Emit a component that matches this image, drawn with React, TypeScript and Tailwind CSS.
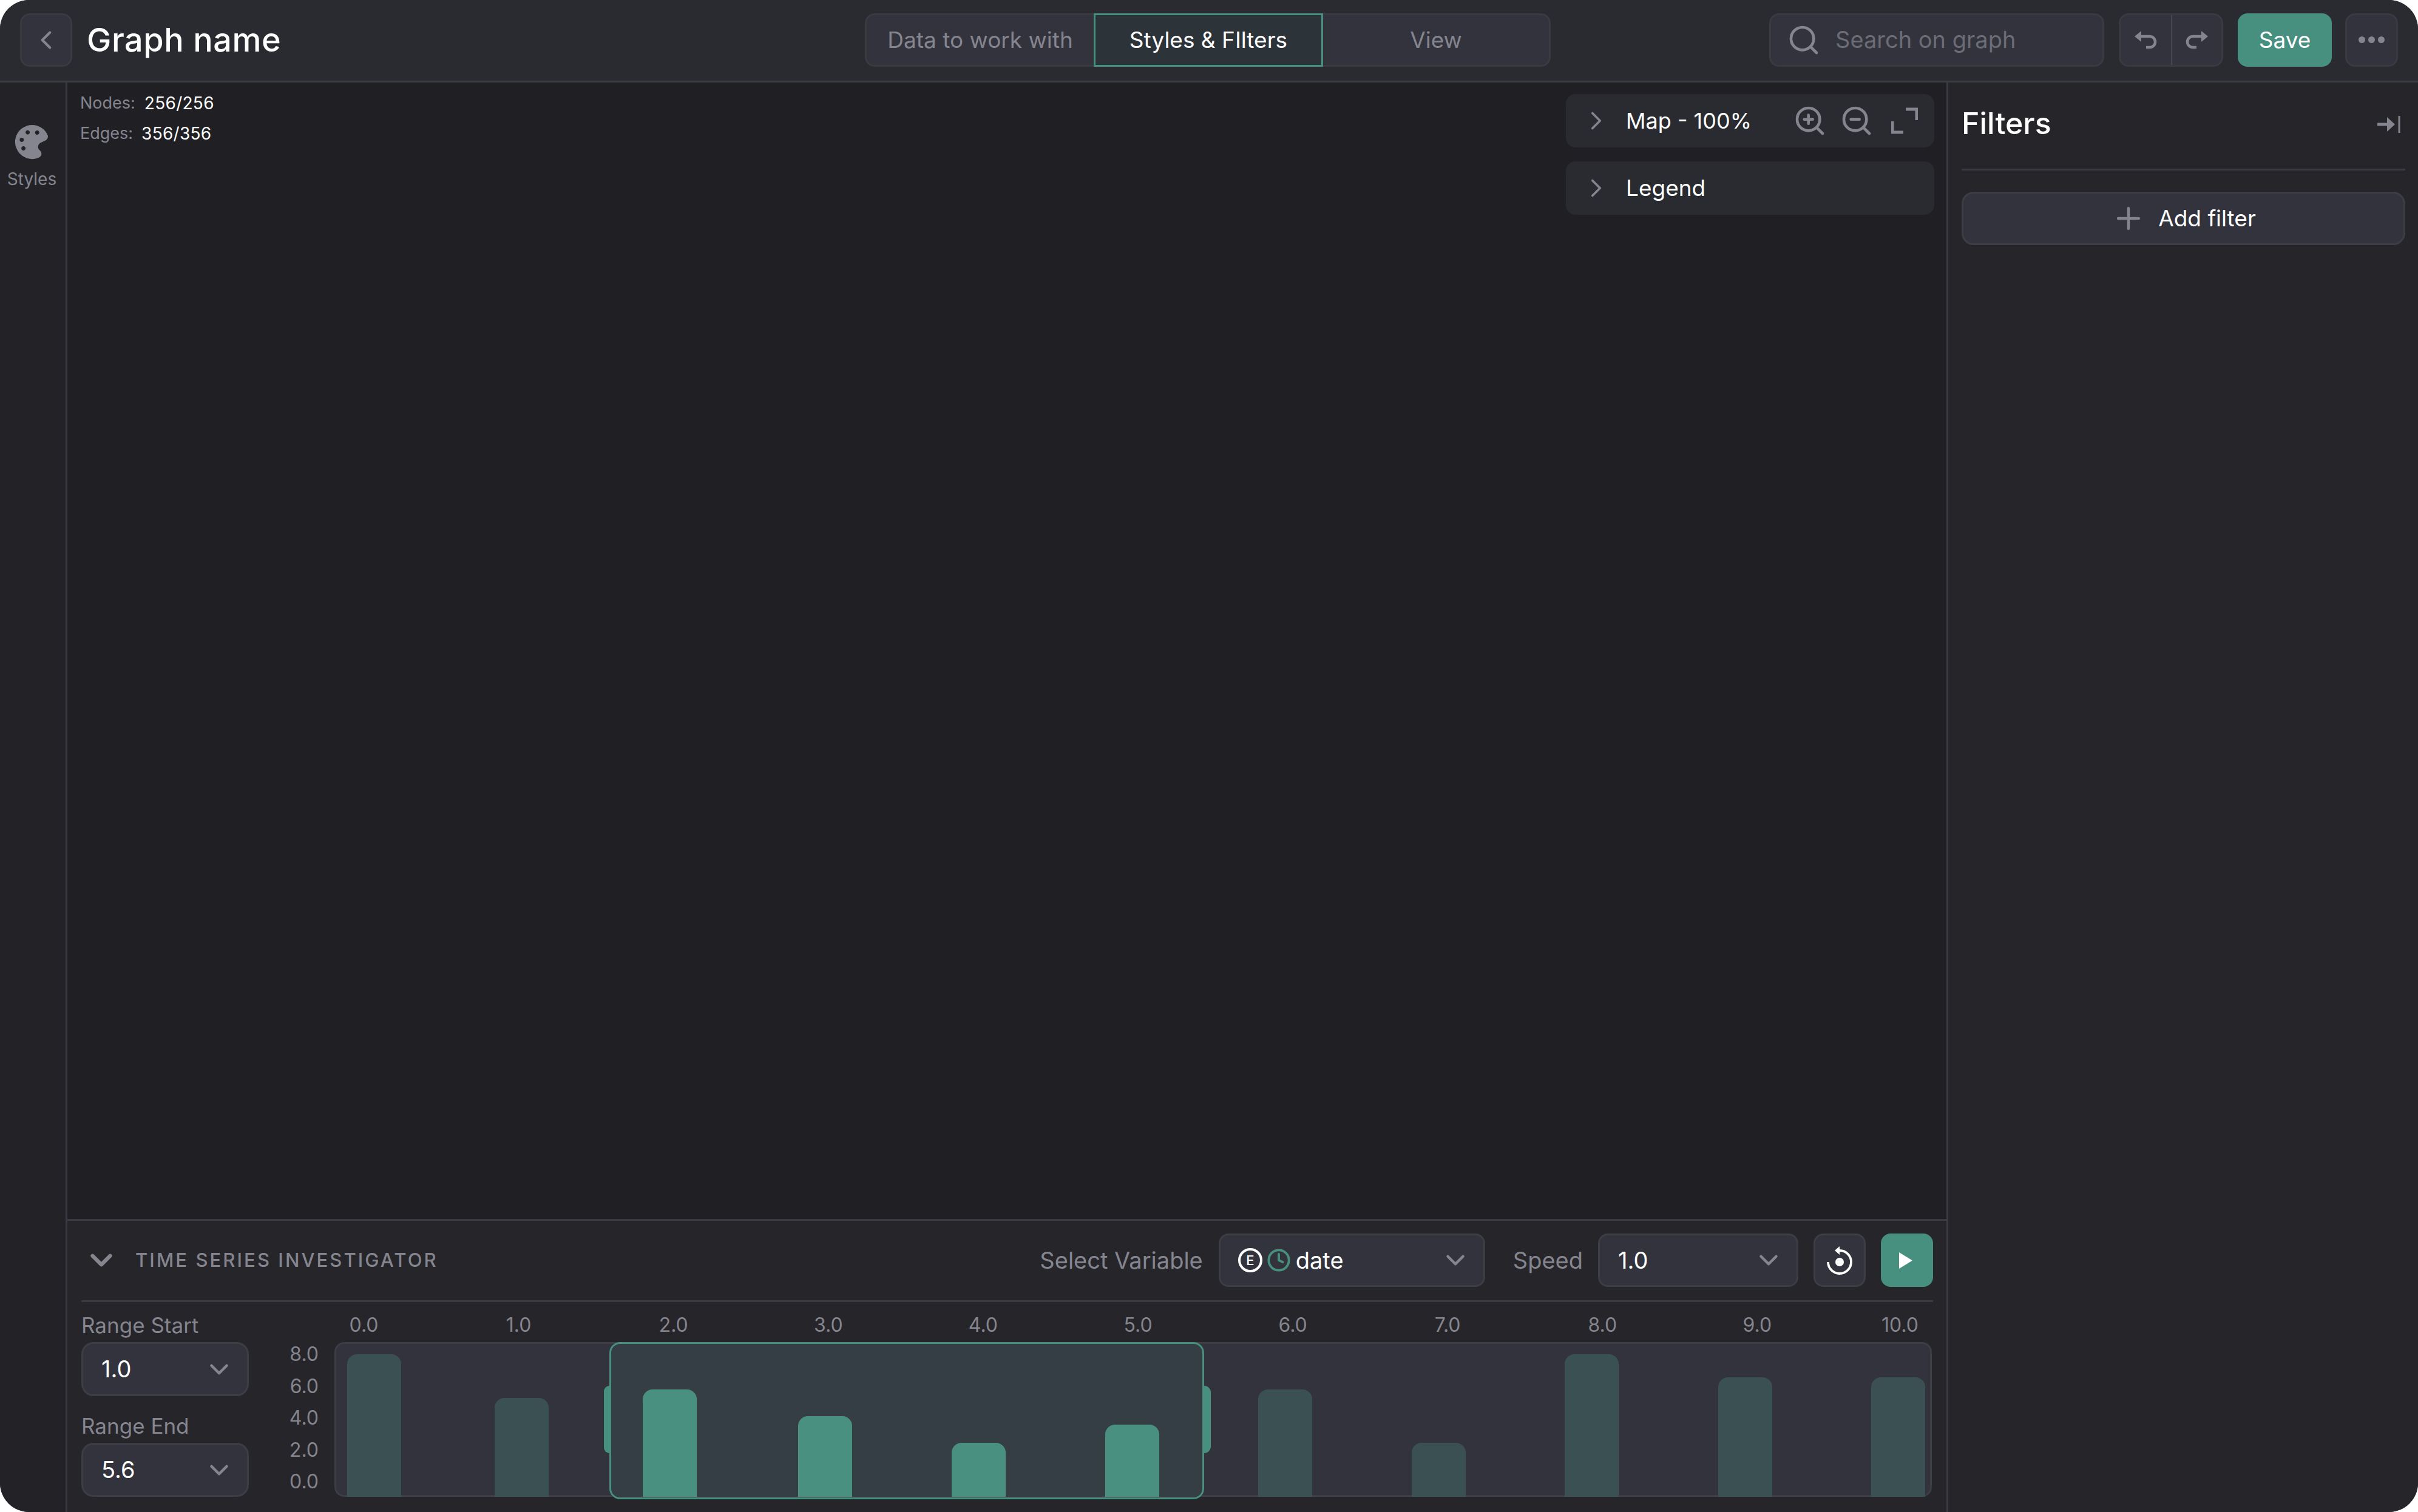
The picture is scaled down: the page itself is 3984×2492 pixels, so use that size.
import { ChevronDown, ChevronLeft, ChevronRight, Clock, Plus, Search, ZoomIn, ZoomOut } from "lucide-react";
import { FaPalette } from "react-icons/fa";

const bars = [
  { x: 18, top: 20, on: false },
  { x: 261, top: 92, on: false },
  { x: 505, top: 78, on: true },
  { x: 761, top: 122, on: true },
  { x: 1014, top: 166, on: true },
  { x: 1267, top: 136, on: true },
  { x: 1519, top: 78, on: false },
  { x: 1772, top: 166, on: false },
  { x: 2024, top: 20, on: false },
  { x: 2277, top: 58, on: false },
  { x: 2529, top: 58, on: false },
];

const xLabels = ["0.0", "1.0", "2.0", "3.0", "4.0", "5.0", "6.0", "7.0", "8.0", "9.0"];
const yLabels = ["8.0", "6.0", "4.0", "2.0", "0.0"];

function RangeSelect({ label, value, mt }: { label: string; value: string; mt: string }) {
  return (
    <div className={mt}>
      <div className="h-[40px] text-[35px] leading-[40px] text-[#85858f]">{label}</div>
      <div className="mt-[8px] flex h-[89px] items-center justify-between rounded-[20px] border-[3px] border-[#3d3e45] bg-[#32333c] pl-[30px] pr-[21px]">
        <span className="text-[38px] text-white">{value}</span>
        <ChevronDown size={50} strokeWidth={2.2} className="text-[#85858f]" />
      </div>
    </div>
  );
}

export default function App() {
  return (
    <div className="h-[2492px] w-[3984px] bg-white font-['Inter',sans-serif]">
      <div className="flex h-full flex-col overflow-hidden rounded-[48px] bg-[#1f1f24]">
        {/* Top bar */}
        <header className="flex h-[136px] shrink-0 items-center border-b-[3px] border-[#3a3b42] bg-[#2a2b30] px-[33px] pb-[2px]">
          <div className="flex w-[1392px] items-center">
            <button className="flex h-[88px] w-[86px] items-center justify-center rounded-[16px] border-[3px] border-[#3a3b42] bg-[#32333c]">
              <ChevronLeft size={50} strokeWidth={2} className="text-[#85858f]" />
            </button>
            <h1 className="ml-[24px] text-[54px] font-medium tracking-[0.01em] text-white">Graph name</h1>
          </div>

          <div className="flex h-[88px] w-[1130px] rounded-[16px] border-[3px] border-[#3a3b42] bg-[#32333c]">
            <div className="flex w-[374px] items-center justify-center text-[37px] text-[#85858f]">Data to work with</div>
            <div className="-my-[3px] flex w-[378px] items-center justify-center border-[3px] border-[#47907f] bg-[#2c343a] text-[37px] text-white">
              Styles &amp; FIlters
            </div>
            <div className="flex flex-1 items-center justify-center text-[37px] text-[#85858f]">View</div>
          </div>

          <div className="ml-auto flex items-center">
            <div className="flex h-[88px] w-[552px] items-center rounded-[16px] border-[3px] border-[#3a3b42] bg-[#32333c] pl-[26px]">
              <Search size={56} strokeWidth={2} className="text-[#85858f]" />
              <span className="ml-[24px] text-[38px] text-[#6b6c75]">Search on graph</span>
            </div>
            <div className="ml-[24px] flex h-[88px] w-[172px] rounded-[16px] border-[3px] border-[#3a3b42] bg-[#32333c]">
              <div className="flex w-[85px] items-center justify-center border-r-[2px] border-[#45464e]">
                <svg width="37" height="30" viewBox="0 0 37 30" className="text-[#85858f]">
                  <path d="M0 9 11 0v18z" fill="currentColor" />
                  <path d="M10 9h15a9 9 0 0 1 0 18h-6" fill="none" stroke="currentColor" strokeWidth="4.5" />
                </svg>
              </div>
              <div className="flex flex-1 items-center justify-center">
                <svg width="37" height="30" viewBox="0 0 37 30" className="text-[#85858f]">
                  <path d="M37 9 26 0v18z" fill="currentColor" />
                  <path d="M27 9H12a9 9 0 0 0 0 18h6" fill="none" stroke="currentColor" strokeWidth="4.5" />
                </svg>
              </div>
            </div>
            <button className="ml-[24px] flex h-[88px] w-[155px] items-center justify-center rounded-[16px] bg-[#47907f] text-[37px] text-white">
              Save
            </button>
            <button className="ml-[22px] flex h-[88px] w-[87px] items-center justify-center gap-[5px] rounded-[16px] border-[3px] border-[#3a3b42] bg-[#32333c]">
              <span className="h-[11px] w-[11px] rounded-full bg-[#85858f]" />
              <span className="h-[11px] w-[11px] rounded-full bg-[#85858f]" />
              <span className="h-[11px] w-[11px] rounded-full bg-[#85858f]" />
            </button>
          </div>
        </header>

        <div className="flex min-h-0 flex-1">
          {/* Left rail */}
          <aside className="flex w-[111px] shrink-0 flex-col items-center border-r-[3px] border-[#3a3b42] bg-[#232327] pr-[3px] pt-[70px]">
            <FaPalette size={56} className="-rotate-[25deg] text-[#85858f]" />
            <span className="mt-[12px] text-[28px] text-[#85858f]">Styles</span>
          </aside>

          <main className="flex min-w-0 flex-1 flex-col">
            {/* Canvas */}
            <div className="flex flex-1 justify-between pl-[21px] pr-[20px]">
              <div className="pt-[9px] text-[27px] leading-[50px]">
                <div className="flex gap-[15px]">
                  <span className="text-[#85858f]">Nodes:</span>
                  <span className="text-[28px] tracking-[0.01em] text-white">256/256</span>
                </div>
                <div className="flex gap-[14px]">
                  <span className="text-[#85858f]">Edges:</span>
                  <span className="text-[28px] tracking-[0.01em] text-white">356/356</span>
                </div>
              </div>

              <div className="flex w-[607px] flex-col gap-[23px] pt-[19px]">
                <div className="flex h-[88px] items-center rounded-[16px] bg-[#2a2b30] pl-[25px] pr-[27px]">
                  <ChevronRight size={50} strokeWidth={1.8} className="text-[#85858f]" />
                  <span className="ml-[24px] text-[36px] text-white">Map - 100%</span>
                  <div className="ml-auto flex items-center gap-[21px] text-[#85858f]">
                    <ZoomIn size={56} strokeWidth={2} />
                    <ZoomOut size={56} strokeWidth={2} />
                    <svg width="44" height="44" viewBox="0 0 44 44" fill="none" stroke="currentColor" strokeWidth="5" className="ml-[8px]">
                      <path d="M24 3h18v18M2 23v18h18" />
                    </svg>
                  </div>
                </div>
                <div className="flex h-[88px] items-center rounded-[16px] bg-[#2a2b30] pl-[25px]">
                  <ChevronRight size={50} strokeWidth={1.8} className="text-[#85858f]" />
                  <span className="ml-[24px] text-[37px] text-white">Legend</span>
                </div>
              </div>
            </div>

            {/* Time series panel */}
            <section className="h-[483px] shrink-0 border-t-[3px] border-[#3a3b42] bg-[#25252a] pl-[23px] pr-[22px] pt-[21px]">
              <div className="flex h-[88px] items-center">
                <ChevronDown size={58} strokeWidth={2.6} className="ml-[4px] text-[#85858f]" />
                <span className="ml-[27px] text-[31px] font-medium tracking-[0.1em] text-[#85858f]">TIME SERIES INVESTIGATOR</span>
                <span className="ml-auto text-[38px] text-[#85858f]">Select Variable</span>
                <div className="ml-[26px] flex h-[88px] w-[439px] items-center rounded-[16px] border-[3px] border-[#3d3e45] bg-[#32333c] pl-[29px] pr-[21px]">
                  <span className="flex h-[40px] w-[40px] items-center justify-center rounded-full border-[4px] border-white text-[22px] font-medium text-white">E</span>
                  <Clock size={40} strokeWidth={2.3} className="ml-[7px] text-[#47907f]" />
                  <span className="ml-[8px] text-[38px] text-white">date</span>
                  <ChevronDown size={50} strokeWidth={2.2} className="ml-auto text-[#85858f]" />
                </div>
                <span className="ml-[46px] text-[38px] text-[#85858f]">Speed</span>
                <div className="ml-[25px] flex h-[88px] w-[330px] items-center justify-between rounded-[16px] border-[3px] border-[#3d3e45] bg-[#32333c] pl-[30px] pr-[21px]">
                  <span className="text-[38px] text-white">1.0</span>
                  <ChevronDown size={50} strokeWidth={2.2} className="text-[#85858f]" />
                </div>
                <button className="ml-[25px] flex h-[88px] w-[86px] items-center justify-center rounded-[16px] border-[3px] border-[#3d3e45] bg-[#32333c]">
                  <svg width="44" height="48" viewBox="0 0 44 48" fill="none" className="text-white">
                    <path d="M3 27a19 19 0 1 0 19-19" stroke="currentColor" strokeWidth="3.8" />
                    <path d="M22 1v14L14 8z" fill="currentColor" />
                    <circle cx="22" cy="27" r="7" fill="currentColor" />
                  </svg>
                </button>
                <button className="ml-[25px] flex h-[88px] w-[86px] items-center justify-center rounded-[16px] bg-[#47907f] pr-[4px]">
                  <svg width="22" height="27" viewBox="0 0 22 27" className="text-white">
                    <path d="M0 0 22 13.5 0 27z" fill="currentColor" />
                  </svg>
                </button>
              </div>

              <div className="mt-[22px] border-t-[3px] border-[#3a3b42]" />

              <div className="mt-[18px] flex">
                <div className="w-[276px] shrink-0">
                  <RangeSelect label="Range Start" value="1.0" mt="" />
                  <RangeSelect label="Range End" value="5.6" mt="mt-[29px]" />
                </div>

                <div className="min-w-0 flex-1">
                  <div className="flex h-[40px] pl-[62px] text-[32px] leading-[40px] text-[#85858f]">
                    {xLabels.map((l) => (
                      <span key={l} className="w-[255.1px] shrink-0 text-center">{l}</span>
                    ))}
                    <span className="-ml-[20px] w-[255px] shrink-0 text-center">10.0</span>
                  </div>
                  <div className="mt-[8px] flex">
                    <div className="flex h-[255px] w-[141px] shrink-0 flex-col justify-between pb-[5px] pr-[26px] text-right text-[32px] leading-[40px] text-[#85858f]">
                      {yLabels.map((l) => (
                        <span key={l}>{l}</span>
                      ))}
                    </div>
                    <div className="h-[255px] w-[2632px] shrink-0 rounded-[16px] border-[3px] border-[#3d3e45] bg-[#32333c]">
                      <svg width="2626" height="249" viewBox="0 0 2626 249" className="overflow-visible">
                        <rect x="451.5" y="-1.5" width="977" height="256" rx="16" fill="#353d45" stroke="#47907f" strokeWidth="3" />
                        <path d="M450 69a9 9 0 0 0-9 9v93a9 9 0 0 0 9 9z" fill="#47907f" />
                        <path d="M1430 69a11 11 0 0 1 11 11v89a11 11 0 0 1-11 11z" fill="#47907f" />
                        {bars.map((b) => (
                          <path
                            key={b.x}
                            d={`M${b.x} 252V${b.top + 13}a16 16 0 0 1 16-16h57a16 16 0 0 1 16 16V252z`}
                            fill={b.on ? "#4a9080" : "#3a5052"}
                          />
                        ))}
                      </svg>
                    </div>
                  </div>
                </div>
              </div>
            </section>
          </main>

          {/* Filters */}
          <aside className="w-[777px] shrink-0 border-l-[3px] border-[#3a3b42] bg-[#25252a] pl-[22px] pr-[21px]">
            <div className="flex h-[145px] items-center justify-between border-b-[3px] border-[#3a3b42] pb-[8px]">
              <h2 className="text-[50px] font-medium text-white">Filters</h2>
              <svg width="38" height="28" viewBox="0 0 38 28" fill="none" className="mr-[8px] mt-[4px] text-[#85858f]">
                <path d="M0 14h20" stroke="currentColor" strokeWidth="5" />
                <path d="M16 2l13 12-13 12z" fill="currentColor" />
                <path d="M36 0v28" stroke="currentColor" strokeWidth="3" />
              </svg>
            </div>
            <button className="mt-[35px] flex h-[88px] w-full items-center justify-center rounded-[20px] border-[3px] border-[#3d3e45] bg-[#32333c]">
              <Plus size={58} strokeWidth={1.8} className="text-[#85858f]" />
              <span className="ml-[20px] text-[37px] text-white">Add filter</span>
            </button>
          </aside>
        </div>
      </div>
    </div>
  );
}
